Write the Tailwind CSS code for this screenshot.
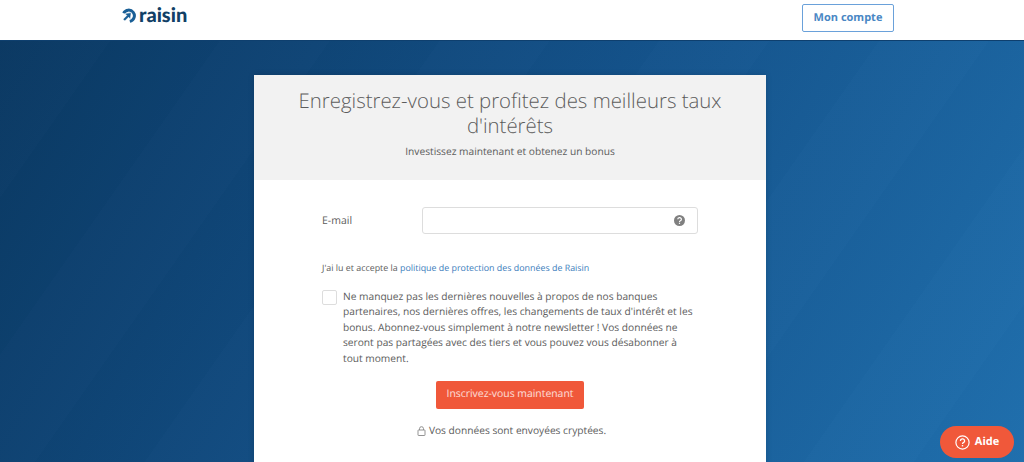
<!DOCTYPE html>
<html lang="fr">
<head>
<meta charset="utf-8">
<script src="https://cdn.jsdelivr.net/npm/@tailwindcss/browser@4"></script>
</head>
<body class="h-[462px] overflow-hidden font-['Open_Sans',sans-serif] [text-rendering:geometricPrecision] relative bg-[#15568f]">
<header class="h-[41px] bg-white flex items-center justify-between pl-[121px] pr-[130px] border-b border-[#0e3f6e]">
  <div class="flex items-center gap-[3px] -mt-[10px] h-[16px]">
    <svg width="15" height="15" viewBox="0 0 15 15" fill="none">
      <path d="M2.6 5.2A5.7 5.7 0 1 1 8.8 13.4" stroke="#1a5f96" stroke-width="3"/>
      <path d="M3.6 5.6L10.2 4.6L9.4 11.2L7.6 9.2L3.8 13L2 11.2L5.8 7.4Z" fill="#1a5f96" stroke="#fff" stroke-width="0.6"/>
    </svg>
    <span class="font-['Lato',sans-serif] font-black text-[20px] leading-none text-[#123f66]">raisin</span>
  </div>
  <div class="w-[92px] h-[28px] -mt-[4px] rounded-[2px] border border-[#6aa1da] flex items-center justify-center text-[11px] font-bold text-[#4a87c4]">Mon compte</div>
</header>
<main class="h-[421px] flex justify-center pt-[34px] bg-[repeating-linear-gradient(125deg,rgba(255,255,255,0.008)_0,rgba(255,255,255,0.008)_90px,rgba(0,0,0,0.008)_90px,rgba(0,0,0,0.008)_180px),linear-gradient(120deg,#0a3862_0%,#14528a_50%,#2070ae_100%)]">
  <section class="w-[512px] h-[400px] bg-white shadow-[0_0_6px_rgba(0,0,0,0.15)] -ml-[4px]">
    <div class="h-[105px] bg-[#f2f2f2] px-10 pt-[13px] text-center">
      <h1 class="text-[20.4px] leading-[24.5px] text-[#5c5c5c] font-light">Enregistrez-vous et profitez des meilleurs taux d'intérêts</h1>
      <p class="mt-[7px] text-[10.2px] leading-[14px] text-[#5c5c5c]">Investissez maintenant et obtenez un bonus</p>
    </div>
    <div class="pl-[68px] pr-[68px] pt-[27px]">
      <div class="flex items-center">
        <label class="w-[100px] text-[10.5px] text-[#5c5c5c] relative top-[1px]">E-mail</label>
        <div class="w-[276px] h-[27px] border border-[#ddd] rounded-[3px] flex items-center justify-end pr-[12px]">
          <svg width="11" height="11" viewBox="0 0 11 11">
            <circle cx="5.5" cy="5.5" r="5.5" fill="#808080"/>
            <path d="M3.8 4.3A1.8 1.7 0 1 1 6.4 5.8C5.8 6.1 5.5 6.3 5.5 6.9" fill="none" stroke="#fff" stroke-width="1.2"/>
            <rect x="4.9" y="7.7" width="1.2" height="1.2" fill="#fff"/>
          </svg>
        </div>
      </div>
      <p class="mt-[27px] text-[8.9px] leading-[14px] text-[#5c5c5c]">J'ai lu et accepte la <span class="text-[#3a7cbb]">politique de protection des données de Raisin</span></p>
      <div class="mt-[15px] flex gap-[6px]">
        <div class="w-[15px] h-[15px] shrink-0 border border-[#ddd] rounded-[2px] bg-white"></div>
        <p class="w-[356px] -mt-[1px] text-[10.2px] leading-[15.4px] text-[#5c5c5c]">Ne manquez pas les dernières nouvelles à propos de nos banques partenaires, nos dernières offres, les changements de taux d'intérêt et les bonus. Abonnez-vous simplement à notre newsletter ! Vos données ne seront pas partagées avec des tiers et vous pouvez vous désabonner à tout moment.</p>
      </div>
      <div class="mt-[15px] flex justify-center">
        <div class="w-[148px] h-[28px] bg-[#f0583a] rounded-[2px] flex items-center justify-center text-[10.4px] text-white/80">Inscrivez-vous maintenant</div>
      </div>
      <div class="mt-[14px] ml-[3px] flex justify-center items-center gap-[3px] text-[10.2px] text-[#5c5c5c]">
        <svg width="9" height="10" viewBox="0 0 9 10" fill="none" stroke="#888" stroke-width="0.9">
          <rect x="1" y="4" width="7" height="5.5" rx="0.5"/>
          <path d="M2.5 4V2.7A2 2 0 0 1 6.5 2.7V4"/>
        </svg>
        <span>Vos données sont envoyées cryptées.</span>
      </div>
    </div>
  </section>
</main>
<div class="absolute left-[940px] top-[426px] w-[74px] h-[32px] rounded-full bg-[#f0583a] flex items-center justify-center gap-[5px] text-white text-[11px] font-bold">
  <svg width="15" height="15" viewBox="0 0 15 15" fill="none" stroke="#fff">
    <circle cx="7.5" cy="7.5" r="6.6" stroke-width="1.2"/>
    <path d="M5.4 5.9A2.1 2 0 1 1 8.4 7.7C7.8 8 7.5 8.3 7.5 9" stroke-width="1.3"/>
    <rect x="6.8" y="10" width="1.4" height="1.4" fill="#fff" stroke="none"/>
  </svg>
  <span>Aide</span>
</div>
</body>
</html>
